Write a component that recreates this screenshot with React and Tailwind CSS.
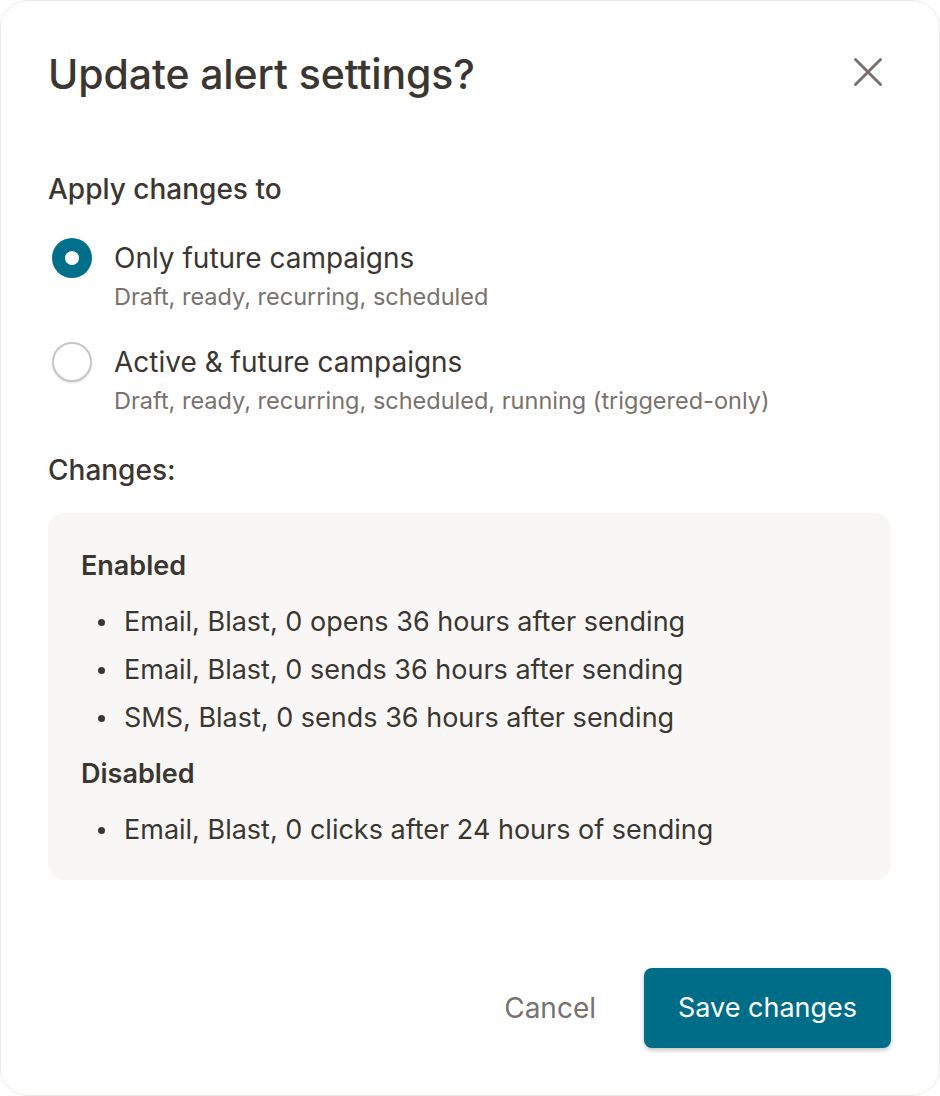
import React, { useState } from "react";

const options = [
  {
    id: "future",
    label: "Only future campaigns",
    hint: "Draft, ready, recurring, scheduled",
  },
  {
    id: "active",
    label: "Active & future campaigns",
    hint: "Draft, ready, recurring, scheduled, running (triggered-only)",
  },
];

const changes = [
  {
    title: "Enabled",
    items: [
      "Email, Blast, 0 opens 36 hours after sending",
      "Email, Blast, 0 sends 36 hours after sending",
      "SMS, Blast, 0 sends 36 hours after sending",
    ],
  },
  {
    title: "Disabled",
    items: ["Email, Blast, 0 clicks after 24 hours of sending"],
  },
];

function Radio({ checked }) {
  if (checked) {
    return (
      <span className="w-[40px] h-[40px] shrink-0 rounded-full bg-[#006f8b] flex items-center justify-center">
        <span className="w-[14px] h-[14px] rounded-full bg-white" />
      </span>
    );
  }
  return (
    <span className="w-[40px] h-[40px] shrink-0 rounded-full border-2 border-[#c9c5c1] bg-white shadow-[0_1px_2px_rgba(0,0,0,0.12)]" />
  );
}

export default function App() {
  const [scope, setScope] = useState("future");

  return (
    <div
      className="w-[940px] h-[1096px] bg-white rounded-[28px] border border-[#ebe9e6] flex flex-col pl-[47px] pr-[48px] pb-[47px] text-[#3b3631]"
      style={{ fontFamily: "Inter, 'Liberation Sans', sans-serif" }}
    >
      <div className="flex items-center justify-between pt-[50px]">
        <h1 className="text-[41px] leading-[46px] font-medium tracking-[-0.1px]">
          Update alert settings?
        </h1>
        <button className="mr-[5px] -mt-[4px] w-[36px] h-[36px] flex items-center justify-center text-[#78716c]">
          <svg width="30" height="30" viewBox="0 0 30 30" fill="none">
            <path
              d="M2.5 2.5L27.5 27.5M27.5 2.5L2.5 27.5"
              stroke="currentColor"
              strokeWidth="3"
              strokeLinecap="round"
            />
          </svg>
        </button>
      </div>

      <p className="mt-[76px] text-[28px] leading-[32px] font-medium">
        Apply changes to
      </p>

      <div className="mt-[33px] flex flex-col gap-[31px]">
        {options.map((o) => (
          <label
            key={o.id}
            className="flex flex-col cursor-pointer"
            onClick={() => setScope(o.id)}
          >
            <div className="flex items-center gap-[22px] ml-[4px] h-[40px]">
              <Radio checked={scope === o.id} />
              <span className="text-[28px] leading-[34px]">{o.label}</span>
            </div>
            <span className="mt-[5px] ml-[66px] text-[23.5px] leading-[28px] text-[#78716c]">
              {o.hint}
            </span>
          </label>
        ))}
      </div>

      <p className="mt-[39px] text-[28px] leading-[32px] font-medium">
        Changes:
      </p>

      <div className="mt-[27px] bg-[#f8f7f5] rounded-[16px] pl-[33px] pt-[37px] pb-[26px] flex flex-col gap-[16px]">
        {changes.map((group) => (
          <div key={group.title} className="flex flex-col gap-[16px]">
            <p className="text-[27px] leading-[32px] font-semibold">
              {group.title}
            </p>
            <ul className="flex flex-col">
              {group.items.map((item) => (
                <li
                  key={item}
                  className="flex items-center text-[27px] leading-[48px]"
                >
                  <span className="ml-[17px] mr-[19px] w-[7px] h-[7px] rounded-full bg-[#3b3631]" />
                  {item}
                </li>
              ))}
            </ul>
          </div>
        ))}
      </div>

      <div className="mt-auto flex items-center justify-end gap-[48px]">
        <button className="text-[28px] leading-[34px] text-[#78716c]">
          Cancel
        </button>
        <button className="w-[247px] h-[80px] rounded-[8px] bg-[#006d88] text-white text-[27px] shadow-[0_2px_4px_rgba(0,0,0,0.25)]">
          Save changes
        </button>
      </div>
    </div>
  );
}
